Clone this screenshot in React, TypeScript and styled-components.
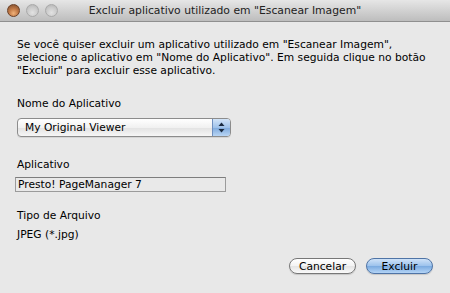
import React from 'react'
import styled, { createGlobalStyle } from 'styled-components'

const GlobalStyle = createGlobalStyle`
  html, body {
    margin: 0;
    padding: 0;
    background: #e8e8e8;
  }
  body {
    font-family: 'DejaVu Sans', 'Liberation Sans', sans-serif;
    color: #000;
  }
`

const Window = styled.div`
  width: 450px;
  height: 293px;
  background: #e8e8e8;
  display: flex;
  flex-direction: column;
  overflow: hidden;
`

const TitleBar = styled.div`
  height: 21px;
  flex: none;
  display: flex;
  align-items: center;
  position: relative;
  background: linear-gradient(#e6e6e6, #bdbdbd);
  border-bottom: 1px solid #8f8f8f;
`

const Lights = styled.div`
  display: flex;
  gap: 6px;
  padding-left: 7px;
`

const Light = styled.div<{ $active?: boolean }>`
  width: 13px;
  height: 13px;
  border-radius: 50%;
  box-sizing: border-box;
  border: 1px solid ${({ $active }) => ($active ? '#6b4026' : '#a9a9a9')};
  background: ${({ $active }) =>
    $active
      ? 'radial-gradient(circle at 50% 75%, #f0b27a 0%, #c27a47 45%, #7a4a2c 100%)'
      : 'radial-gradient(circle at 50% 70%, #e2e2e2 0%, #cacaca 55%, #b0b0b0 100%)'};
`

const Title = styled.div`
  position: absolute;
  left: 0;
  right: 0;
  top: 0;
  height: 21px;
  line-height: 21px;
  text-align: center;
  font-size: 10.8px;
  color: #222;
  pointer-events: none;
`

const Body = styled.div`
  flex: 1;
  display: flex;
  flex-direction: column;
  padding: 16px 17px 0 17px;
  font-size: 10.7px;
`

const Intro = styled.p`
  margin: 0;
  line-height: 13px;
`

const Label = styled.div<{ $top: number }>`
  margin-top: ${({ $top }) => $top}px;
  line-height: 13px;
`

const Select = styled.div`
  margin-top: 8px;
  width: 214px;
  height: 19px;
  box-sizing: border-box;
  border: 1px solid #8c8c8c;
  border-radius: 4px;
  display: flex;
  overflow: hidden;
  background: linear-gradient(#ffffff, #f1f1f1 50%, #e2e2e2 51%, #f6f6f6);
  box-shadow: 0 1px 0 rgba(0, 0, 0, 0.08);
`

const SelectText = styled.div`
  flex: 1;
  padding-left: 7px;
  line-height: 17px;
`

const Stepper = styled.div`
  width: 17px;
  border-left: 1px solid #6e8fbf;
  background: linear-gradient(#d2e4f8, #9fc2ea 50%, #7ea9dc 51%, #b8d5f4);
  display: flex;
  align-items: center;
  justify-content: center;
`

const Field = styled.div`
  margin-top: 6px;
  margin-left: -2px;
  width: 211px;
  height: 15px;
  box-sizing: border-box;
  border: 1px solid #9b9b9b;
  border-top-color: #7d7d7d;
  padding-left: 2px;
  line-height: 13px;
  background: #e9e9e9;
`

const Buttons = styled.div`
  margin-top: auto;
  margin-bottom: 19px;
  display: flex;
  justify-content: flex-end;
  gap: 10px;
`

const Button = styled.div<{ $primary?: boolean }>`
  width: 67px;
  height: 16px;
  box-sizing: border-box;
  border-radius: 8px;
  border: 1px solid ${({ $primary }) => ($primary ? '#4f74a6' : '#777')};
  background: ${({ $primary }) =>
    $primary
      ? 'linear-gradient(#cfe2f8, #9cc2ec 50%, #7aaae0 51%, #b4d4f6)'
      : 'linear-gradient(#ffffff, #f3f3f3 50%, #e4e4e4 51%, #fafafa)'};
  display: flex;
  align-items: center;
  justify-content: center;
  font-size: 10.7px;
  box-shadow: 0 1px 1px rgba(0, 0, 0, 0.15);
`

const Arrows = () => (
  <svg width="7" height="11" viewBox="0 0 7 11">
    <path d="M3.5 0.5 L6.5 4 L0.5 4 Z" fill="#1a2a40" />
    <path d="M3.5 10.5 L6.5 7 L0.5 7 Z" fill="#1a2a40" />
  </svg>
)

export default function App() {
  return (
    <Window>
      <GlobalStyle />
      <TitleBar>
        <Lights>
          <Light $active />
          <Light />
          <Light />
        </Lights>
        <Title>Excluir aplicativo utilizado em "Escanear Imagem"</Title>
      </TitleBar>
      <Body>
        <Intro>
          Se você quiser excluir um aplicativo utilizado em "Escanear Imagem",
          <br />
          selecione o aplicativo em "Nome do Aplicativo". Em seguida clique no botão
          <br />
          "Excluir" para excluir esse aplicativo.
        </Intro>
        <Label $top={20}>Nome do Aplicativo</Label>
        <Select>
          <SelectText>My Original Viewer</SelectText>
          <Stepper>
            <Arrows />
          </Stepper>
        </Select>
        <Label $top={21}>Aplicativo</Label>
        <Field>Presto! PageManager 7</Field>
        <Label $top={17}>Tipo de Arquivo</Label>
        <Label $top={6}>JPEG (*.jpg)</Label>
        <Buttons>
          <Button>Cancelar</Button>
          <Button $primary>Excluir</Button>
        </Buttons>
      </Body>
    </Window>
  )
}
